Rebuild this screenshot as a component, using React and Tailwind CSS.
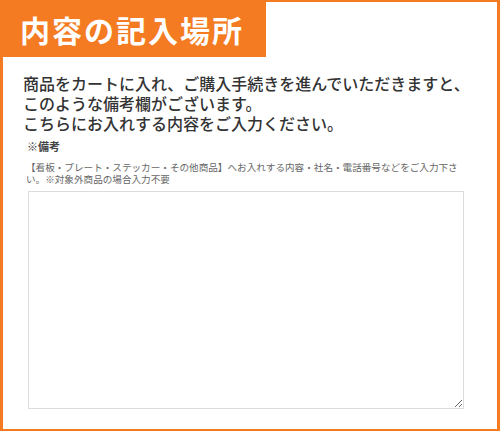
import React from "react";

// ── Note field section ─────────────────────────────────────
export default function App() {
  const font = { fontFamily: '"Noto Sans CJK JP", "Noto Sans", sans-serif' };
  return (
    <div style={font} className="w-[500px] h-[431px] bg-white border-t-2 border-b-2 border-x-[3px] border-[#f47b22] flex flex-col">
      <div className="w-[263px] h-[55px] -mt-[2px] -ml-[3px] box-content pl-[3px] pt-[2px] bg-[#f47b22] flex items-center">
        <h1 className="ml-[17px] -mt-[2px] text-[30px] leading-none font-bold tracking-[2px] text-white">内容の記入場所</h1>
      </div>

      <div className="mt-[16px] pl-[20px] text-[16px] leading-[20px] font-medium text-[#333]">
        <p>商品をカートに入れ、ご購入手続きを進んでいただきますと、</p>
        <p>このような備考欄がございます。</p>
        <p>こちらにお入れする内容をご入力ください。</p>
      </div>

      <div className="ml-[23px] w-[438px] mt-[5px] flex flex-col">
        <p className="text-[11px] leading-[16px] font-bold text-[#444] pl-[1px]">※備考</p>
        <p className="mt-[7px] text-[9.6px] leading-[12px] text-[#666]">
          【看板・プレート・ステッカー・その他商品】へお入れする内容・社名・電話番号などをご入力下さい。※対象外商品の場合入力不要
        </p>
        <textarea className="mt-[6px] ml-[2px] w-[436px] h-[218px] border border-[#dcdcdc] bg-white" />
      </div>
    </div>
  );
}
